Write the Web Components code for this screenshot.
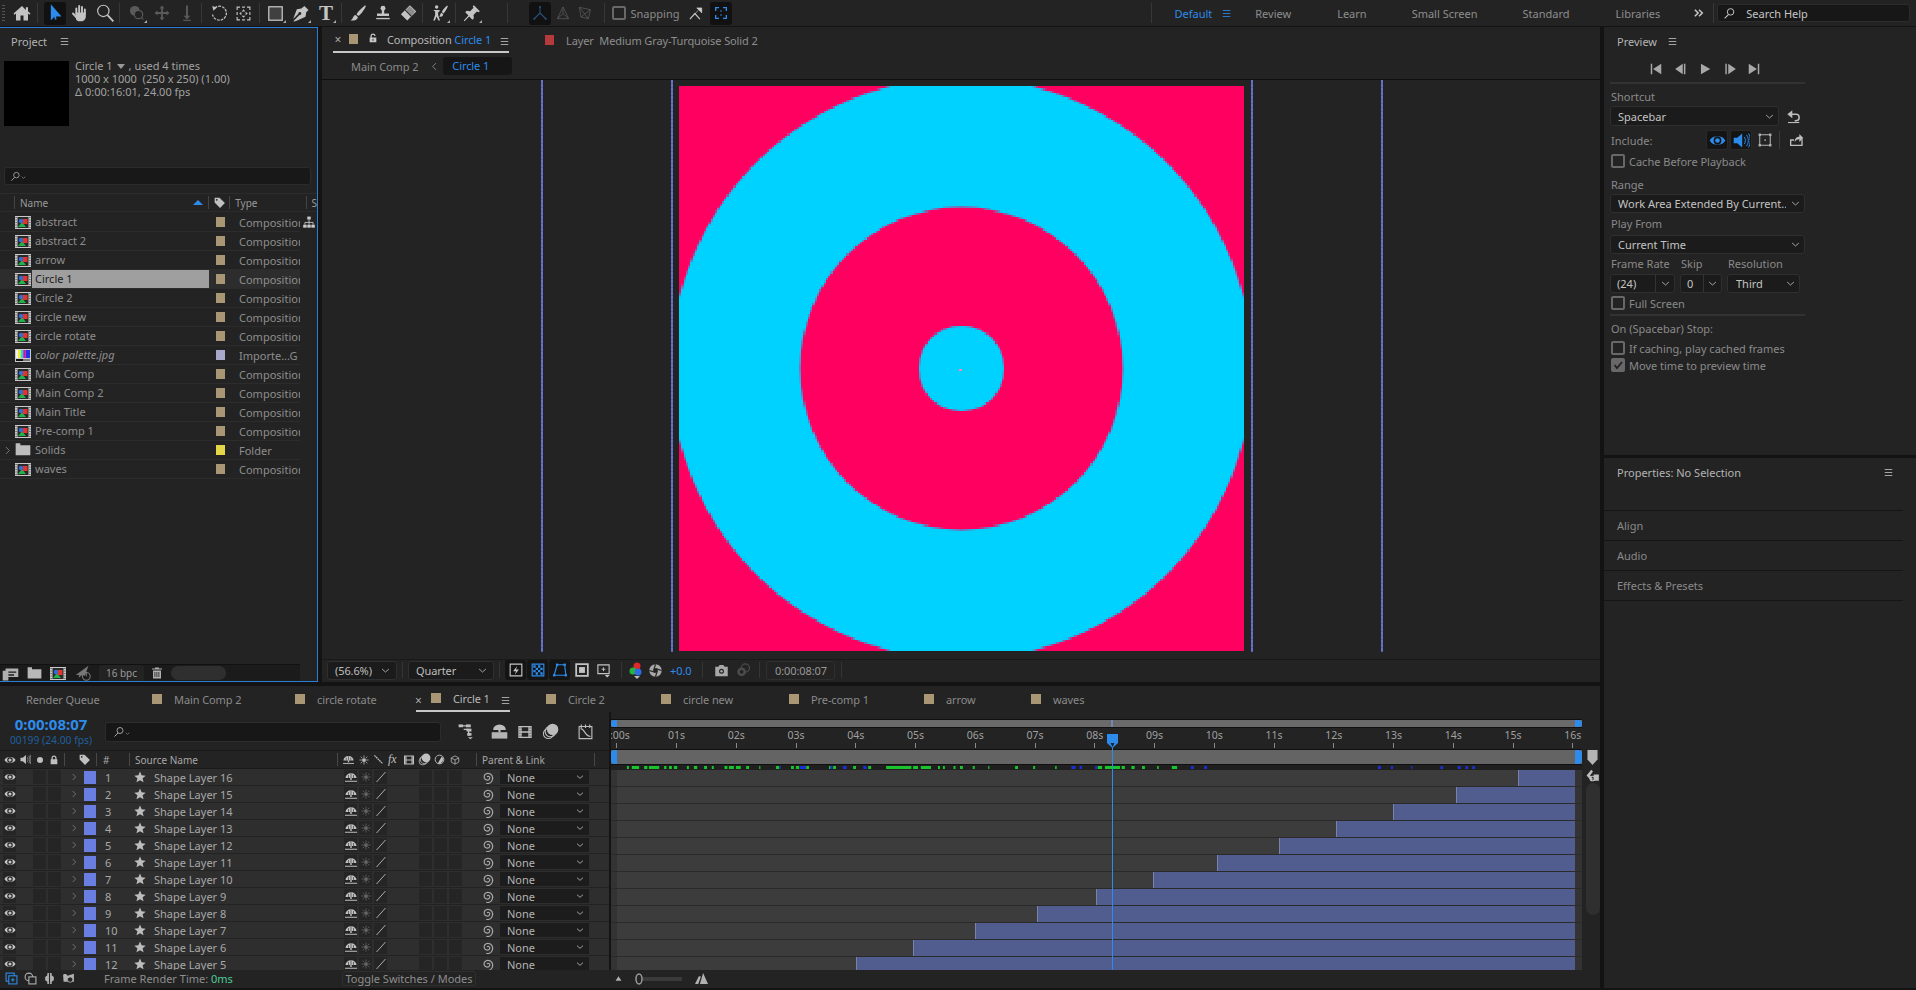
<![CDATA[<!DOCTYPE html>
<html lang="en"><head><meta charset="utf-8"><title>After Effects</title>
<style>
html,body{margin:0;height:990px;overflow:hidden;background:#131313}
body{font:11px "Noto Sans","Open Sans",sans-serif;color:#8e8e8e}
</style></head><body><ae-app></ae-app>
<script>
const BLUE='#2d8ceb';
const ICONS={
home:'<path d="M12 3.5 1.8 12.6l1.3 1.5L4.8 12.7V21h5.4v-6h3.6v6h5.4v-8.3l1.7 1.4 1.3-1.5-3-2.7V5h-2.6v3.3z"/>',
arrow:'<path d="M7 1.5v19.5l4.2-4.6.7 3.6 2-.4-.7-3.5h6.6z"/>',
hand:'<g stroke="currentColor" stroke-linecap="round" stroke-width="2.3" fill="none"><path d="M7.6 13V6.5M11 12V3.6M14.4 12V4.6M17.8 13V7.6M3.6 12.6 7.4 17"/></g><path d="M6.6 11.5h12.4v4.5c0 3.4-2.2 6-5.2 6h-2.4c-2 0-3.2-1-4.2-2.6z"/>',
zoom:'<circle cx="10" cy="9.5" r="6.8" fill="none" stroke="currentColor" stroke-width="1.4"/><path d="m15 14.5 7 7.5" stroke="currentColor" stroke-width="2.2"/>',
orbit:'<circle cx="9" cy="9" r="6.5"/><circle cx="14" cy="14" r="5.6" fill="#232323" stroke="currentColor" stroke-width="1.6"/><path d="M18 20l3 1-1-3z"/>',
move:'<path d="M12 2l3.4 4h-2.2v4.8H18V8.6l4 3.4-4 3.4v-2.2h-4.8V18h2.2L12 22l-3.4-4h2.2v-4.8H6v2.2L2 12l4-3.4v2.2h4.8V6H8.6z"/>',
zarrow:'<path d="M10.7 2h2.6v13.5h3l-4.3 5-4.3-5h3z"/><rect x="7" y="21" width="10" height="1.6"/>',
undo:'<path d="M6.5 5.2A9.3 9.3 0 1 1 3.4 14" fill="none" stroke="currentColor" stroke-width="1.7" stroke-dasharray="3.6 1.4"/><path d="M3 2.5 9 4.6 4.6 9z"/>',
cam:'<path d="M3 7V3h4M10 3h4M17 3h4v4M21 10v4M21 17v4h-4M14 21h-4M7 21H3v-4M3 14v-4" fill="none" stroke="currentColor" stroke-width="1.6"/><path d="M12 6l2.5 3h-5zM12 18l-2.5-3h5zM6 12l3-2.5v5zM18 12l-3 2.5v-5z"/>',
rect:'<rect x="2.5" y="2.5" width="19" height="19" fill="#404040" stroke="currentColor" stroke-width="1.8"/>',
pen:'<path d="M16.5 2.5 22 8l-3 3-1 6-11 5-5 1.500 1-2 7-7a2 2 0 1 0-1.500-1.500l-7 7L6.500 7l6-1z"/>',
brush:'<path d="M21.500 1.500C17 5 12 10 10 13.500l2.500 2.500C16 14 20 8 22.500 3z"/><path d="M9 14.500c-3.500 0-3 5-7 7.500 4.500.5 9-.5 10-4.500z"/>',
stamp:'<circle cx="12" cy="5.500" r="3.300"/><path d="M10.400 8h3.200v4.500H20v3.500H4v-3.500h6.400z"/><rect x="3" y="18.500" width="18" height="1.800"/>',
eraser:'<path d="M14.500 1.500 23 10 11 22 2.500 13.500z"/><path d="M8 8l8.500 8.500" stroke="#232323" stroke-width="1.400"/><path d="M8.500 8.500 14.500 3l7 7-5 6z" fill="#232323" opacity=".35"/>',
puppet:'<circle cx="7.500" cy="4" r="2.300"/><path d="M3 8h8.500v1.800L9.500 11v3.500l2.500 7.500H9.800l-2.300-5.500L5.200 22H3l2.500-7.500V10z"/><path d="M21.500 2c-3 2.500-6 6-7 8.500l2 2C19 10.500 21.500 6 22.500 3zM14 11.500c-2 .5-1.500 4-3 5.500 3 .3 5-1 5.300-3.500z"/>',
pin:'<path d="M14.500 1.500 22.500 9.500l-2 1.500-2-1-4.500 4.500.5 4.500-2 2-4.200-4.300L2 23l-1-1 6.200-6.800L3 11l2-2 4.500.5L14 5l-1-2z"/>',
axes:'<path d="M12 2v10M12 12 3 21M12 12l9 9" fill="none" stroke="currentColor" stroke-width="1.600"/><circle cx="12" cy="3" r="1.500"/><circle cx="3.500" cy="20.500" r="1.500"/><circle cx="20.500" cy="20.500" r="1.500"/>',
axes2:'<path d="M12 3 3.500 20.500h17zM12 3v10M12 13l-8.500 7.500M12 13l8.500 7.500" fill="none" stroke="currentColor" stroke-width="1.200"/>',
axes3:'<path d="M3.500 3.500 20 7 17 20.500 6 18zM3.500 3.500 17 20.500M20 7 6 18" fill="none" stroke="currentColor" stroke-width="1.200"/>',
snap:'<path d="M3 21 11 12l8 9" fill="none" stroke="currentColor" stroke-width="2"/><path d="M14 3h8v8zM11 13l5-6" fill="#ccc" stroke="#ccc"/>',
focus:'<path d="M4 9V4h5M15 4h5v5M20 15v5h-5M9 20H4v-5" fill="none" stroke="currentColor" stroke-width="2"/><rect x="11" y="8" width="2" height="2"/><rect x="11" y="14" width="2" height="2"/>',
search:'<circle cx="14" cy="9" r="6" fill="none" stroke="currentColor" stroke-width="1.800"/><path d="M10 14 3 21" stroke="currentColor" stroke-width="2"/>',
first:'<path d="M3 3h2.500v18H3zM21 3v18L7 12z"/>',prev:'<path d="M15 3v18L2 12zM17 3h2.500v18H17z"/>',play:'<path d="M5 3v18l16-9z"/>',next:'<path d="M4 3h2.500v18H4zM9 3v18l13-9z"/>',last:'<path d="M3 3v18l14-9zM18.500 3H21v18h-2.500z"/>',
revert:'<path d="M5 9.500h10a4.700 4.700 0 0 1 0 9.500h-2" fill="none" stroke="currentColor" stroke-width="2.200"/><path d="M9.500 3.500v12L2 9.500z"/><rect x="3" y="21" width="17" height="1.600"/>',
eye:'<path fill-rule="evenodd" d="M1 12C4 4 20 4 23 12c-3 8-19 8-22 0zm11-5.500a5.500 5.500 0 1 0 0 11 5.500 5.500 0 0 0 0-11z"/><circle cx="12" cy="12" r="3.200"/>',
speaker:'<path d="M1 8h5l7-6v20l-7-6H1z"/><path d="M16 7c2 3 2 7 0 10M19 4c3.500 5 3.500 11 0 16M22 2c3 5 3 15 0 20" fill="none" stroke="currentColor" stroke-width="1.400"/>',
frame:'<path d="M3 3h18v18H3z" fill="none" stroke="currentColor" stroke-width="1.800"/><rect x="11" y="11" width="2.500" height="2.500"/><rect x="1" y="1" width="4" height="4"/><rect x="19" y="1" width="4" height="4"/><rect x="1" y="19" width="4" height="4"/><rect x="19" y="19" width="4" height="4"/>',
export:'<path d="M3 11h6v2H5v6h15v-8h2v10H3z"/><path d="M10 15c0-6 3-8 7-8V3l6 6-6 6v-4c-3 0-5 1-7 4z"/>',
flow:'<rect x="9" y="1" width="6" height="5"/><rect x="2" y="15" width="6" height="5"/><rect x="9" y="15" width="6" height="5"/><rect x="16" y="15" width="6" height="5"/><path d="M12 6v5M5 15v-4h14v4M12 11v4" fill="none" stroke="currentColor" stroke-width="1.500"/>',
tag:'<path d="M3 3h9l10 10-9 9L3 12z"/><circle cx="7" cy="7" r="1.600" fill="#232323"/>',
lock:'<path d="M6 10V7a6 6 0 0 1 12 0v3h2v12H4V10zm3 0h6V7a3 3 0 0 0-6 0z"/>',
lockopen:'<path d="M6 11V7a6 6 0 0 1 12 0h-3a3 3 0 0 0-6 0v4h11v11H4V11z"/><rect x="11" y="14" width="2" height="5" fill="#232323"/>',
star:'<path d="M12 1l3.200 7.600 8.200.700-6.200 5.400 1.900 8L12 18.400 4.900 22.700l1.900-8L.6 9.300l8.200-.7z"/>',
shy:'<path d="M1 14a11 9.500 0 0 1 22 0H13.400v4h-2.800v-4z"/><rect x="0" y="19.500" width="24" height="2"/><path d="M7 14V8M17 14V8M12 14V5" stroke="#252525" stroke-width="1.200"/>',
shy2:'<path d="M3 10a9 8 0 0 1 18 0h-7.500v3h-3v-3z"/><rect x="1" y="13" width="22" height="9" opacity=".95"/>',
sun:'<circle cx="12" cy="12" r="4.500"/><path d="M12 1v6M12 17v6M1 12h6M17 12h6M4 4l4 4M16 16l4 4M20 4l-4 4M8 16l-4 4" stroke="currentColor" stroke-width="1.800"/>',
qual:'<path d="M3 22 21 2" stroke="currentColor" stroke-width="1.800"/>',
qual2:'<path d="M3 3l18 18" stroke="currentColor" stroke-width="2.600" stroke-dasharray="4 1"/>',
film:'<path fill-rule="evenodd" d="M2 3h20v18H2zm3 2H4v2h1zm0 4H4v2h1zm0 4H4v2h1zm0 4H4v2h1zm15-12h-1v2h1zm0 4h-1v2h1zm0 4h-1v2h1zm0 4h-1v2h1zM7 5v6h10V5zm0 8v6h10v-6z"/>',
blend:'<circle cx="9" cy="15" r="7" fill="none" stroke="currentColor" stroke-width="1.500"/><circle cx="12" cy="12" r="7.500" fill="none" stroke="currentColor" stroke-width="1.500"/><circle cx="15" cy="9" r="8"/>',
half:'<circle cx="12" cy="12" r="9.500" fill="none" stroke="currentColor" stroke-width="2"/><path d="M17 5.500A9 9 0 0 1 8 20.500z"/>',
cube:'<path d="M12 2 21 7v10l-9 5-9-5V7zM3 7l9 5 9-5M12 12v10" fill="none" stroke="currentColor" stroke-width="1.800"/>',
graph:'<path d="M3 5h18v17H3z" fill="none" stroke="currentColor" stroke-width="1.600"/><path d="M6 2v5M12 2v5M18 2v5" stroke="currentColor" stroke-width="1.600"/><path d="M5 8c6 0 6 11 14 11" fill="none" stroke="currentColor" stroke-width="1.600"/>',
flowt:'<path d="M1 4h10M8 9h7M15 9v9" stroke="currentColor" stroke-width="1.800" fill="none"/><rect x="1" y="2" width="6" height="4"/><rect x="11" y="2" width="7" height="4"/><rect x="12" y="8" width="7" height="4"/><rect x="13" y="14" width="6" height="4"/><path d="M14 20h7l-3.500 3z"/>',
spiral:'<path d="M12 12c1.500-2 5-.5 4 2.500-1 3-6.500 3-8-.5-1.500-4 2-8 6-7.500 5 .5 7.500 5.500 6 10-1.500 4-5.500 6-9 5" fill="none" stroke="currentColor" stroke-width="1.800"/>',
chev:'<path d="m3 8 9 8 9-8" fill="none" stroke="currentColor" stroke-width="2.600"/>',
chevr:'<path d="m8 3 9 9-9 9" fill="none" stroke="currentColor" stroke-width="2.200"/>',
chevl:'<path d="m16 3-9 9 9 9" fill="none" stroke="currentColor" stroke-width="2.400"/>',
dblr:'<path d="m2 4 8 8-8 8M12 4l8 8-8 8" fill="none" stroke="currentColor" stroke-width="3.600"/>',
menu:'<path d="M2 4h20M2 12h20M2 20h20" stroke="currentColor" stroke-width="2.200"/>',
sq:'<path d="M2 2h20v20H2z" fill="none" stroke="currentColor" stroke-width="3"/><rect x="7" y="7" width="10" height="10"/>',
flash:'<path d="M2 2h20v20H2z" fill="none" stroke="currentColor" stroke-width="2"/><path d="M14 5 7 14h5l-2 6 7-9h-5z"/>',
checker:'<path d="M2 2h20v20H2z" fill="none" stroke="currentColor" stroke-width="2"/><path d="M4 4h4v4H4zM12 4h4v4h-4zM8 8h4v4H8zM16 8h4v4h-4zM4 12h4v4H4zM12 12h4v4h-4zM8 16h4v4H8zM16 16h4v4h-4z"/>',
mask:'<path d="M7 3h13l2 18H2z" fill="none" stroke="currentColor" stroke-width="2"/><rect x="5" y="1" width="4" height="4"/><rect x="18" y="1" width="4" height="4"/><rect x="0" y="19" width="4" height="4"/><rect x="20" y="19" width="4" height="4"/>',
grid:'<path d="M3 3h18v14H3z" fill="none" stroke="currentColor" stroke-width="1.800"/><path d="M12 7v6M9 10h6" stroke="currentColor" stroke-width="1.500"/><path d="M14 19h8l-4 4z"/>',
exposure:'<circle cx="12" cy="12" r="10"/><path d="M12 2 9 12M22 12 12 9M12 22l3-10M2 12l10 3" stroke="#232323" stroke-width="1.800"/><circle cx="12" cy="12" r="3.500" fill="#232323"/>',
camera:'<path fill-rule="evenodd" d="M2 6h5l2-3h6l2 3h5v15H2zm10 3a4 4 0 1 0 0 8 4 4 0 0 0 0-8z"/><circle cx="12" cy="13" r="2"/>',
camera2:'<circle cx="15" cy="8" r="6.500" fill="none" stroke="currentColor" stroke-width="2"/><circle cx="9" cy="14" r="7"/><circle cx="9" cy="14" r="3" fill="#232323"/>',
folder:'<path d="M1 5V2h7v3h15v15H1z"/>',
newcomp:'<path d="M1 8h4V5h18v12H9v5H1zM9 9h11v2H9zM9 13h8v2H9z" fill-rule="evenodd"/>',
rocket:'<path d="M1 14 19 1l-5 14-4-1-5 4 1-4z"/><circle cx="16" cy="16" r="5.500" fill="none" stroke="currentColor" stroke-width="1.500"/><path d="M16 10v6" stroke="currentColor" stroke-width="1.500"/>',
trash:'<path d="M8 3V1h8v2h6v2H2V3zM4 7h16v16H4zm3 3v10h1.600V10zm4 0v10h1.600V10zm4 0v10h1.600V10z" fill-rule="evenodd"/>',
mount1:'<path d="M12 4 22 20H2z"/>',mount2:'<path d="M15 2 24 22H9zM7 8l4 .5L6 22H0z"/>',
shield:'<path d="M1 0h22v15L12 24 1 15z"/>',
status1:'<rect x="2" y="2" width="15" height="15" fill="none" stroke="currentColor" stroke-width="2"/><rect x="7" y="7" width="15" height="15" fill="#232323" stroke="currentColor" stroke-width="2"/><path d="M14.500 11v7M11 14.500h7" stroke="currentColor" stroke-width="1.800"/>',
status2:'<circle cx="9" cy="9" r="7" fill="none" stroke="currentColor" stroke-width="2"/><rect x="9" y="9" width="13" height="13" fill="#232323" stroke="currentColor" stroke-width="2"/>',
status3:'<path d="M8 2h8v4l4 3v6l-4 3v4H8v-4l-4-3V9l4-3z"/><rect x="11" y="2" width="2" height="20" fill="#232323"/>',
status4:'<path d="M2 6c0-3 7-4 8 1l3-1 9-3v15H3z"/><circle cx="15" cy="14" r="5" fill="#232323" stroke="currentColor" stroke-width="1.500"/>',
corner:'<path d="M9 22 1 13l8-10 3 3-5 7 5 6zM13 11h9v11h-9z"/><circle cx="11" cy="18" r="4" fill="none" stroke="currentColor" stroke-width="1.800"/>',
};
function def(name,css,html,init){
  customElements.define(name,class extends HTMLElement{
    connectedCallback(){
      if(this.shadowRoot)return;
      const r=this.attachShadow({mode:'open'});
      const a=n=>this.getAttribute(n);
      r.innerHTML='<style>'+css+'</style>'+(typeof html==='function'?html(a,this):html);
      if(init)init(r,a,this);
    }
  });
}
def('ae-icon',':host{display:inline-flex;flex:none;align-items:center;justify-content:center}svg{display:block;fill:currentColor}',
 (a)=>{const s=a('s')||16;const t=a('t')||s;return `<svg width="${s}" height="${t}" viewBox="0 0 24 24" preserveAspectRatio="${a('t')?'none':'xMidYMid'}">${ICONS[a('n')]||''}</svg>`;});
def('ae-comp-icon',':host{display:inline-block;flex:none;width:16px;height:13px}svg{display:block}',
 ()=>`<svg width="16" height="13" viewBox="0 0 16 13"><rect width="16" height="13" fill="#c9c9c9"/><path d="M.6 1.500h1M.6 4h1M.6 6.500h1M.6 9h1M.6 11.500h1M14.400 1.500h1M14.400 4h1M14.400 6.500h1M14.400 9h1M14.400 11.500h1" stroke="#333"/><rect x="2.500" y="1" width="11" height="11" fill="#2a2a2a"/><path d="M3 11 7 6l4 5z" fill="#22b24c"/><rect x="7.500" y="3" width="5" height="5" fill="#e0342f"/><circle cx="6" cy="5" r="2.200" fill="#2e6fd8"/></svg>`);
def('ae-pal-icon',':host{display:inline-block;flex:none;width:16px;height:13px}svg{display:block}',
 ()=>`<svg width="16" height="13" viewBox="0 0 16 13"><rect width="16" height="13" fill="#c9c9c9"/><rect x="1" y="1" width="2.400" height="8" fill="#f2f2f2"/><rect x="3.400" y="1" width="2.400" height="8" fill="#f4f200"/><rect x="5.800" y="1" width="2.400" height="8" fill="#00e8e8"/><rect x="8.200" y="1" width="2.400" height="8" fill="#ff00a0"/><rect x="10.600" y="1" width="4.400" height="8" fill="#2233dd"/><rect x="1" y="10" width="7" height="2" fill="#111"/><rect x="8" y="10" width="7" height="2" fill="#777"/></svg>`);
def('ae-swatch',':host{display:inline-block;flex:none;width:var(--w,9px);height:var(--h,10px);background:var(--c,#a99675)}','');
def('ae-check',`:host{display:flex;align-items:center;height:14px;color:#8a8a8a}
 i{flex:none;width:10px;height:10px;border:2px solid #686868;border-radius:2px;margin-right:4px;display:block;position:relative}
 :host([on]) i{background:#686868}
 svg{position:absolute;left:0;top:0}`,
 (a,el)=>`<i>${el.hasAttribute('on')?'<svg width="10" height="10" viewBox="0 0 10 10"><path d="M1.500 5l2.500 3 5-6" fill="none" stroke="#222" stroke-width="1.800"/></svg>':''}</i><slot></slot>`);
def('ae-dd',`:host{display:flex;align-items:center;box-sizing:border-box;background:#1b1b1b;border:1px solid #2f2f2f;border-radius:3px;color:#bdbdbd;padding-left:7px;white-space:nowrap;overflow:hidden}
 span{flex:1;min-width:0;overflow:hidden}
 b{flex:none;width:1px;align-self:stretch;background:#333}
 ae-icon{width:var(--cw,18px);color:#a8a8a8}`,
 (a,el)=>`<span><slot></slot></span>${el.hasAttribute('split')?'<b></b>':''}<ae-icon n="chev" s="9"></ae-icon>`);

/* ---------- tool button ---------- */
def('ae-tool',`:host{display:flex;flex:none;align-items:center;justify-content:center;width:var(--w,25px);height:25px;color:var(--c,#c4c4c4);position:relative}
 :host([active]) .b{background:#111;border-radius:3px}
 .b{display:flex;align-items:center;justify-content:center;width:22px;height:23px}
 :host([m]) .b::after{content:"";position:absolute;right:2px;bottom:3px;border-left:3px solid transparent;border-bottom:3px solid #aaa}`,
 (a)=>`<div class="b"><ae-icon n="${a('n')}" s="${a('s')||18}"></ae-icon><slot></slot></div>`);

def('ae-toolbar',`:host{display:flex;align-items:center;height:26px;background:#232323;flex:none;white-space:nowrap;color:#8e8e8e;padding-left:9px;box-sizing:border-box;position:relative}
 .g{display:flex;flex:none}
 .dim{--c:#5a5a5a}
 .s{flex:none;width:1px;height:20px;background:#383838}
 .t{font:700 21px "Liberation Serif",serif;color:#c4c4c4;line-height:25px}
 .wk{display:flex;align-items:center}
 .wk span{flex:none}
 .search{margin-left:3px;width:193px;height:18px;box-sizing:border-box;background:#171717;border:1px solid #2c2c2c;border-radius:3px;display:flex;align-items:center;color:#c6c6c6;padding-left:5px;gap:10px}
 .grip{position:absolute;left:2px;top:5px;width:3px;height:16px;background:repeating-linear-gradient(#555 0 1px,transparent 1px 3px)}`,
 ()=>`<div class="grip"></div>
 <div class="g"><ae-tool n="home" s="20"></ae-tool></div><div class="s" style="margin:0 3px"></div>
 <div class="g" style="margin-left:1px"><ae-tool n="arrow" s="20" active style="--c:${BLUE}"></ae-tool><ae-tool n="hand" s="20"></ae-tool><ae-tool n="zoom" s="20"></ae-tool></div><div class="s" style="margin:0 4px 0 2px"></div>
 <div class="g dim"><ae-tool n="orbit" m></ae-tool><ae-tool n="move"></ae-tool><ae-tool n="zarrow"></ae-tool></div><div class="s" style="margin:0 4px 0 2px"></div>
 <div class="g"><ae-tool n="undo"></ae-tool><ae-tool n="cam" s="17"></ae-tool></div><div class="s" style="margin:0 3px"></div>
 <div class="g"><ae-tool n="rect" m s="17"></ae-tool><ae-tool n="pen" m></ae-tool><ae-tool m n="" s="1"><span class="t">T</span></ae-tool></div><div class="s" style="margin:0 3px"></div>
 <div class="g"><ae-tool n="brush" ></ae-tool><ae-tool n="stamp"></ae-tool><ae-tool n="eraser"></ae-tool></div><div class="s" style="margin:0 4px 0 2px"></div>
 <div class="g"><ae-tool n="puppet" m></ae-tool></div><div class="s" style="margin:0 3px"></div>
 <div class="g"><ae-tool n="pin" m></ae-tool></div><div class="s" style="margin:0 21px 0 23px"></div>
 <div class="g" style="--w:22.500px;"><ae-tool n="axes" s="16" active style="--c:#26527e"></ae-tool><ae-tool n="axes2" s="16" style="--c:#585858"></ae-tool><ae-tool n="axes3" s="16" style="--c:#585858"></ae-tool></div><div class="s" style="margin:0 7px 0 7px"></div>
 <ae-check><span style="margin-left:1px">Snapping</span></ae-check>
 <ae-tool n="snap" s="15" style="margin-left:4px;--w:25px"></ae-tool>
 <ae-tool n="focus" s="16" active style="--c:${BLUE}"></ae-tool>
 <div class="s" style="margin-left:418px"></div>
 <div class="wk" style="margin-left:22px"><span style="color:${BLUE}">Default</span><ae-icon n="menu" s="9" style="color:${BLUE};margin-left:10px"></ae-icon>
 <span style="margin-left:24px">Review</span><span style="margin-left:46px">Learn</span><span style="margin-left:45px">Small Screen</span><span style="margin-left:45px">Standard</span><span style="margin-left:46px">Libraries</span>
 <ae-icon n="dblr" s="10" style="color:#c8c8c8;margin-left:34px"></ae-icon></div>
 <div class="s" style="margin-left:9px"></div>
 <div class="search"><ae-icon n="search" s="13"></ae-icon><span>Search Help</span></div>`);

/* ---------- project panel ---------- */
def('ae-prow',`:host{display:flex;height:19px;flex:none}
 .in{display:flex;align-items:center;width:300px;box-sizing:border-box;border-bottom:1px solid #2c2c2c;overflow:hidden;white-space:nowrap}
 :host([sel]) .in{background:#2d2d2d}
 .ar{flex:none;width:15px;display:flex;justify-content:center;color:#888}
 .ic{flex:none;width:17px;display:flex}
 .nm{flex:none;width:177px;box-sizing:border-box;padding-left:3px;height:18px;line-height:18px}
 :host([sel]) .nm{background:#9f9f9f;color:#1c1c1c}
 :host([it]) .nm{font-style:italic}
 .lb{flex:none;width:30px;padding-left:7px;box-sizing:border-box;display:flex}
 .ty{flex:none;width:61px;overflow:hidden}
 .tr{flex:none;width:17px;color:#c8c8c8;display:flex;justify-content:center;align-items:center}`,
 (a,el)=>{const k=a('k');
  const ic=k==='folder'?'<ae-icon n="folder" s="16" style="color:#bdbdbd"></ae-icon>':k==='pal'?'<ae-pal-icon></ae-pal-icon>':'<ae-comp-icon></ae-comp-icon>';
  return `<div class="in"><div class="ar">${k==='folder'?'<ae-icon n="chevr" s="9"></ae-icon>':''}</div><div class="ic">${ic}</div><div class="nm">${a('name')}</div><div class="lb"><ae-swatch style="--c:${a('c')||'#a99675'}"></ae-swatch></div><div class="ty">${a('type')}</div></div><div class="tr">${el.hasAttribute('flow')?'<ae-icon n="flow" s="14"></ae-icon>':''}</div>`;});

def('ae-project',`:host{display:flex;flex-direction:column;box-sizing:border-box;width:318px;flex:none;background:#232323;border:1px solid #2a7fd4;border-left:0;overflow:hidden;color:#8e8e8e}
 .h{flex:none;height:26px;display:flex;align-items:center;padding-left:11px;color:#b4b4b4;gap:13px}
 .info{flex:none;display:flex;padding:7px 0 0 4px;height:65px;gap:6px;color:#a2a2a2;line-height:13px}
 .info>div+div{margin-top:-2px}
 .th{width:65px;height:65px;background:#000;flex:none}
 .l1{display:flex;align-items:center;gap:4px}
 .tri{border:4px solid transparent;border-top:5px solid #999;border-bottom:0;margin-top:2px}
 .s{flex:none;margin:41px 6px 0 4px;height:18px;box-sizing:border-box;background:#181818;border:1px solid #2c2c2c;border-radius:3px;display:flex;align-items:center;padding-left:5px;color:#aaa}
 .hd{flex:none;display:flex;align-items:center;margin-top:8px;height:19px;box-sizing:border-box;border-top:1px solid #2c2c2c;border-bottom:1px solid #2c2c2c;font-size:10px;color:#9a9a9a;white-space:nowrap}
 .hd b{flex:none;width:1px;height:13px;background:#444}
 .list{flex:1;min-height:0;display:flex;flex-direction:column;margin-top:1px}
 .f{flex:none;height:17px;display:flex;width:300px;background:#1b1b1b;border-top:1px solid #111;box-sizing:border-box;align-items:center;color:#a8a8a8}
 .bpc{width:45px;height:16px;background:#232323;border-radius:2px;box-sizing:border-box;text-align:center;line-height:16px;font-size:10px;color:#999;margin-left:7px}
 .sb{width:55px;height:14px;border-radius:7px;background:#2f2f2f;margin-left:7px}
 .up{border:5px solid transparent;border-bottom:5px solid ${BLUE};border-top:0;margin-left:auto;margin-right:5px}`,
 ()=>{const rows=[['abstract',1],['abstract 2'],['arrow'],['Circle 1',0,1],['Circle 2'],['circle new'],['circle rotate'],['color palette.jpg',0,0,'pal'],['Main Comp'],['Main Comp 2'],['Main Title'],['Pre-comp 1'],['Solids',0,0,'folder'],['waves']];
 return `<div class="h"><span>Project</span><ae-icon n="menu" s="9" style="color:#c0c0c0"></ae-icon></div>
 <div class="info"><div class="th"></div><div><div class="l1">Circle 1 <i class="tri"></i> , used 4 times</div><div>1000 x 1000&nbsp; (250 x 250) (1.00)</div><div>Δ 0:00:16:01, 24.00 fps</div></div></div>
 <div class="s"><ae-icon n="search" s="11"></ae-icon><ae-icon n="chev" s="5" style="margin-top:3px"></ae-icon></div>
 <div class="hd"><b style="margin-left:14px"></b><span style="width:195px;padding-left:5px;box-sizing:border-box;display:flex;align-items:center;height:100%">Name<i class="up"></i></span><b></b><ae-icon n="tag" s="13" style="width:20px;color:#c0c0c0"></ae-icon><b></b><span style="width:76px;padding-left:5px;box-sizing:border-box">Type</span><b></b><span style="padding-left:5px">S</span></div>
 <div class="list">${rows.map(r=>{const k=r[3]||'comp';const c=k==='pal'?'#a8a8cc':k==='folder'?'#e3d649':'#a99675';const t=k==='pal'?'Importe...G':k==='folder'?'Folder':'Composition';return `<ae-prow name="${r[0]}" k="${k}" c="${c}" type="${t}" ${r[1]?'flow':''} ${r[2]?'sel':''} ${k==='pal'?'it':''}></ae-prow>`}).join('')}</div>
 <div class="f"><ae-icon n="newcomp" s="17" style="margin-left:2px;color:#b0b0b0"></ae-icon><ae-icon n="folder" s="15" style="margin-left:8px;color:#b8b8b8"></ae-icon><span style="margin-left:8px;display:flex"><ae-comp-icon></ae-comp-icon></span><ae-icon n="rocket" s="17" style="margin-left:9px;color:#777"></ae-icon><div class="bpc">16 bpc</div><ae-icon n="trash" s="12" style="margin-left:7px;color:#b0b0b0"></ae-icon><div class="sb" style="margin-left:8px"></div></div>`});

/* ---------- composition ---------- */
def('ae-guides',':host{position:absolute;inset:0;pointer-events:none}i{position:absolute;top:0;width:2px;height:572px;background:repeating-linear-gradient(#6474cc 0 3px,#5563b4 3px 4px)}','<i style="left:219px"></i><i style="left:349px"></i><i style="left:929px"></i><i style="left:1059px"></i>');
def('ae-canvas',':host{display:block;flex:none;width:565px;height:565px}canvas{display:block;width:565px;height:565px;image-rendering:pixelated}','<canvas width="250" height="250"></canvas>',
 (r)=>{const c=r.querySelector('canvas').getContext('2d');
  const C=(rad,col)=>{c.fillStyle=col;c.beginPath();c.arc(125,125,rad,0,7);c.fill()};
  c.fillStyle='#ff0060';c.fillRect(0,0,250,250);C(128.8,'#00d2ff');C(71.4,'#ff0060');C(19,'#00d2ff');c.fillStyle='#ff7fb0';c.fillRect(124,125,1,1)});
def('ae-comp',`:host{display:flex;flex-direction:column;width:1278px;flex:none;background:#232323;overflow:hidden;color:#8e8e8e;white-space:nowrap;margin-top:0;letter-spacing:-.1px}
 .t{flex:none;height:26px;display:flex;align-items:center;position:relative;padding-left:11px}
 .on{display:flex;align-items:center;width:176px;height:100%;box-sizing:border-box;border-bottom:2px solid #c8c8c8;color:#b8b8b8;position:relative;padding-left:0}
 .b{color:${BLUE}}
 .st{flex:none;height:26px;display:flex;align-items:center;color:#8a8a8a;padding-left:29px;border-bottom:1px solid #0f0f0f}
 .box{width:69px;height:18px;box-sizing:border-box;background:#161616;border-radius:3px;color:${BLUE};line-height:18px;padding-left:9px}
 .v{flex:1;min-height:0;position:relative;padding:6px 0 0 357px;background:#232323}
 .bar{flex:none;height:23px;display:flex;align-items:center;border-top:1px solid #191919;box-sizing:border-box;background:#232323;padding:0 0 2px 5px;color:#a8a8a8}
 .bar ae-dd{height:19px;flex:none;--cw:22px}
 .btn{flex:none;width:21px;height:20px;display:flex;align-items:center;justify-content:center;color:#c4c4c4;margin-right:1px}
 .btn.on2{background:#141414;border-radius:3px;color:${BLUE}}
 .sp{flex:none;width:1px;height:16px;background:#353535}
 .tc{flex:none;width:69px;height:19px;box-sizing:border-box;border:1px solid #2f2f2f;border-radius:3px;text-align:center;line-height:17px;color:#999;margin:0 6px}`,
 ()=>`<div class="t"><div class="on"><span style="width:16px;color:#aaa;font-size:12px;text-align:center;margin-left:-3px;margin-right:3px">×</span><ae-swatch style="--w:9px;--h:10px"></ae-swatch><ae-icon n="lockopen" s="10" style="margin:-3px 0 0 10px;color:#c8c8c8"></ae-icon><span style="margin-left:9px">Composition&nbsp;<span class="b">Circle 1</span></span><ae-icon n="menu" s="9" style="position:absolute;right:0;top:10px;color:#c0c0c0"></ae-icon></div>
 <ae-swatch style="--c:#b53a3d;margin-left:36px"></ae-swatch><span style="margin-left:12px">Layer&nbsp; Medium Gray-Turquoise Solid 2</span></div>
 <div class="st"><span>Main Comp 2</span><ae-icon n="chevl" s="9" style="margin:0 4px 0 12px"></ae-icon><div class="box">Circle 1</div></div>
 <div class="v"><ae-canvas></ae-canvas><ae-guides></ae-guides></div>
 <div class="bar"><ae-dd style="width:70px">(56.6%)</ae-dd><div class="sp" style="margin:0 5px"></div><ae-dd style="width:86px">Quarter</ae-dd><div class="sp" style="margin:0 5px 0 5px"></div>
 <div class="btn" style="background:#141414;border-radius:3px"><ae-icon n="flash" s="14"></ae-icon></div><div class="btn on2"><ae-icon n="checker" s="14"></ae-icon></div><div class="btn on2"><ae-icon n="mask" s="14"></ae-icon></div><div class="btn"><ae-icon n="sq" s="14"></ae-icon></div><div class="btn"><ae-icon n="grid" s="15"></ae-icon></div>
 <div class="sp" style="margin:0 7px 0 6px"></div>
 <svg width="16" height="18" viewBox="0 0 16 18" style="flex:none;margin-right:3px"><circle cx="8" cy="5" r="3.500" fill="#e0282a"/><circle cx="4" cy="10" r="3.500" fill="#27b33f"/><circle cx="9" cy="11" r="3.500" fill="#2f6be0"/><path d="M5 15h6l-3 3z" fill="#bbb"/></svg>
 <ae-icon n="exposure" s="15"></ae-icon><span style="color:${BLUE};margin-left:7px">+0.0</span>
 <div class="sp" style="margin:0 11px 0 11px"></div><ae-icon n="camera" s="15"></ae-icon><ae-icon n="camera2" s="15" style="margin-left:7px;color:#4c4c4c"></ae-icon><div class="sp" style="margin-left:8px"></div><div class="tc">0:00:08:07</div><div class="sp"></div></div>`);

/* ---------- preview ---------- */
def('ae-preview',`:host{display:flex;flex-direction:column;height:428px;flex:none;background:#232323;box-sizing:border-box;padding:0 0 0 6px;color:#8a8a8a;white-space:nowrap}
 .h{height:28px;display:flex;align-items:center;padding-left:7px;gap:11px;color:#b4b4b4;flex:none}
 .pb{display:flex;height:27px;align-items:center;color:#a8a8a8;padding-left:39px;flex:none;gap:10.500px}
 hr{border:0;height:2px;background:#323232;margin:0;width:195px;flex:none}
 .lb{height:15px;line-height:15px;padding-left:1px;flex:none}
 .w{display:flex;align-items:center;flex:none}
 .c{color:#c4c4c4}
 ae-check{flex:none;padding-left:1px}
 ae-dd{flex:none}
 .b{width:22px;height:20px;background:#141414;border-radius:3px;border:1px solid #2a2a2a;box-sizing:border-box;display:flex;align-items:center;justify-content:center;color:${BLUE};flex:none}`,
 ()=>`<div class="h"><span>Preview</span><ae-icon n="menu" s="9" style="color:#c0c0c0"></ae-icon></div>
 <div class="pb"><ae-icon n="first" s="14"></ae-icon><ae-icon n="prev" s="14"></ae-icon><ae-icon n="play" s="14"></ae-icon><ae-icon n="next" s="14"></ae-icon><ae-icon n="last" s="14"></ae-icon></div>
 <hr>
 <div class="lb" style="margin-top:5px">Shortcut</div>
 <div class="w" style="margin-top:2px"><ae-dd class="c" style="width:169px;height:20px">Spacebar</ae-dd><ae-icon n="revert" s="16" style="margin-left:7px;color:#bdbdbd"></ae-icon></div>
 <div class="w" style="margin-top:4px;height:20px"><span style="padding-left:1px;width:95px">Include:</span><div class="b"><ae-icon n="eye" s="17"></ae-icon></div><div class="b" style="margin-left:2px"><ae-icon n="speaker" s="17"></ae-icon></div><ae-icon n="frame" s="14" style="margin-left:6px;color:#b4b4b4"></ae-icon><span style="width:1px;height:18px;background:#3a3a3a;margin-left:7px"></span><ae-icon n="export" s="16" style="margin-left:8px;color:#bdbdbd"></ae-icon></div>
 <ae-check style="margin-top:4px">Cache Before Playback</ae-check>
 <div class="lb" style="margin-top:9px">Range</div>
 <ae-dd class="c" style="width:195px;height:19px;margin-top:2px">Work Area Extended By Current...</ae-dd>
 <div class="lb" style="margin-top:3px">Play From</div>
 <ae-dd class="c" style="width:195px;height:19px;margin-top:4px">Current Time</ae-dd>
 <div class="w lb" style="margin-top:2px"><span style="width:70px">Frame Rate</span><span style="width:47px">Skip</span><span>Resolution</span></div>
 <div class="w" style="margin-top:3px"><ae-dd class="c" split style="width:65px;height:19px;padding-left:6px">(24)</ae-dd><ae-dd class="c" split style="width:42px;height:19px;margin-left:5px;padding-left:6px;--cw:17px">0</ae-dd><ae-dd class="c" style="width:73px;height:19px;margin-left:5px;padding-left:8px">Third</ae-dd></div>
 <ae-check style="margin-top:3px">Full Screen</ae-check>
 <hr style="margin-top:4px">
 <div class="lb" style="margin-top:5px">On (Spacebar) Stop:</div>
 <ae-check style="margin-top:5px">If caching, play cached frames</ae-check>
 <ae-check on style="margin-top:3px">Move time to preview time</ae-check>`);
def('ae-props',`:host{display:flex;flex-direction:column;flex:1;min-height:0;background:#232323;color:#8a8a8a;box-sizing:border-box}
 .h{height:28px;display:flex;align-items:center;justify-content:space-between;padding:0 23px 0 13px;color:#b4b4b4;flex:none}
 .sp{height:24px;flex:none;border-bottom:1px solid #151515;margin-right:13px}
 .r{height:29px;line-height:29px;flex:none;padding-left:13px;border-bottom:1px solid #151515;margin-right:13px}`,
 ()=>`<div class="h"><span>Properties: No Selection</span><ae-icon n="menu" s="9" style="color:#c0c0c0"></ae-icon></div><div class="sp"></div><div class="r">Align</div><div class="r">Audio</div><div class="r">Effects &amp; Presets</div>`);

/* ---------- timeline ---------- */
def('ae-ttab',`:host{display:flex;align-items:center;flex:none;height:100%;box-sizing:border-box;color:#8a8a8a;white-space:nowrap;gap:12px;letter-spacing:-.1px}
 :host([on]){border-bottom:2px solid #c8c8c8;color:#b8b8b8;position:relative}`,
 (a,el)=>`<ae-swatch style="--w:10px"></ae-swatch><span>${a('t')}</span>`);
def('ae-layer',`:host{display:flex;align-items:center;height:17px;box-sizing:border-box;background:#2e2e2e;border-bottom:1px solid #222;flex:none;width:609px;color:#a8a8a8;white-space:nowrap;overflow:hidden}
 .k{flex:none;width:13px;height:14px;background:#252525;display:flex;align-items:center;justify-content:center}`,
 (a)=>`<div class="k" style="margin-left:3px"><ae-icon n="eye" s="12" style="color:#c4c4c4"></ae-icon></div><div class="k" style="margin-left:17px"></div><div class="k" style="margin-left:2px"></div>
 <ae-icon n="chevr" s="8" style="margin-left:9px;color:#888"></ae-icon><ae-swatch style="--c:#6a7de0;--w:12px;--h:13px;margin-left:6px"></ae-swatch>
 <span style="width:38px;flex:none;padding-left:9px;box-sizing:border-box">${a('n')}</span><ae-icon n="star" s="12" style="color:#bdbdbd"></ae-icon><span style="flex:none;width:198px;box-sizing:border-box;padding-left:8px">${a('name')}</span>
 <div class="k" style="color:#c0c0c0"><ae-icon n="shy" s="12"></ae-icon></div><div class="k" style="margin-left:2px;color:#666"><ae-icon n="sun" s="10"></ae-icon></div><div class="k" style="margin-left:2px;color:#bbb"><ae-icon n="qual" s="12"></ae-icon></div>
 <div class="k" style="margin-left:32px"></div><div class="k" style="margin-left:2px"></div><div class="k" style="margin-left:2px"></div>
 <ae-icon n="spiral" s="16" style="margin-left:17px;color:#a8a8a8"></ae-icon><div style="flex:none;width:89px;height:14px;margin-left:5px;background:#1c1c1c;display:flex;align-items:center;padding-left:7px;box-sizing:border-box;color:#b4b4b4"><span style="flex:1">None</span><ae-icon n="chev" s="8" style="width:18px"></ae-icon></div>`);
def('ae-track',`:host{display:flex;height:17px;box-sizing:border-box;flex:none;background:#3c3c3c;border-bottom:1px solid #2a2a2a;position:relative;padding-left:6px}
 :host::before{content:"";position:absolute;left:0;top:0;bottom:0;width:6px;background:#333}
 :host::after{content:"";position:absolute;right:0;top:0;bottom:0;width:7px;background:#333}
 i{display:block;flex:none;height:16px;background:#525d8f;border-left:1px solid #7a82a8;box-sizing:border-box}`,
 (a)=>`<i style="margin-left:${a('s')-617}px;width:${1575-a('s')}px"></i>`);
def('ae-ruler',`:host{display:block;height:20px;overflow:hidden;flex:none;background:#232323}
 .g{display:grid;grid-template-columns:repeat(17,59.750px);margin-left:-24px;width:1016px}
 .c{display:flex;flex-direction:column;align-items:center;height:20px;font-size:10.500px;color:#a0a0a0;line-height:15px}
 .c i{display:block;width:1px;height:5px;background:#888;margin-top:auto}`,
 ()=>`<div class="g">${Array.from({length:17},(_,i)=>`<div class="c"><span>${i==0?'0:00s':String(i).padStart(2,'0')+'s'}</span><i></i></div>`).join('')}</div>`);
def('ae-cache',':host{display:block;height:5px;background:#1f1f1f;flex:none}svg{display:block}',
 ()=>{const z=x=>600+x/2.45, y=x=>1240+x/2.32;
  const G=[[66,71],[78,96],[108,116],[120,145],[157,163],[169,176],[181,189],[213,218],[230,238],[255,262],[274,279],[305,312],[316,328],[333,345],[358,365],[390,393],[431,439],[468,475],[480,488],[505,512],[561,565],[571,578],[620,627],[657,664],[701,763],[767,779],[786,811],[828,833],[840,845],[866,871],[882,889],[913,918],[951,954],[1017,1024],[1061,1066],[1115,1119],[1219,1230],[1237,1274],[1278,1286],[1302,1310],[1328,1335],[1365,1369],[1401,1414]];
  const B=[[440,443],[490,505],[565,570],[595,604],[645,653],[1155,1165],[1175,1181],[1213,1218],[1448,1455],[1480,1487]];
  const B2=[[320,327],[350,355],[397,400],[465,471],[505,512],[523,529],[539,545]];
  const rc=(f,a,c)=>a.map(p=>`<rect x="${(f(p[0])-611).toFixed(1)}" y="1" width="${((p[1]-p[0])/(f===z?2.45:2.32)).toFixed(1)}" height="3" fill="${c}"/>`).join('');
  return `<svg width="971" height="5">${rc(z,G,'#19c42c')}${rc(z,B,'#1b2fd6')}${rc(y,B2,'#1b2fd6')}</svg>`;});
def('ae-playhead',`:host{position:absolute;left:495.500px;top:22px;bottom:0;width:11px;pointer-events:none}
 svg{display:block}i{position:absolute;left:5px;top:13px;bottom:0;width:1px;background:${BLUE}}`,
 ()=>`<svg width="11" height="14" viewBox="0 0 11 14"><path d="M0 0h11v9l-5.500 5L0 9z" fill="${BLUE}"/><path d="M3.500 9h4l-2 4z" fill="#123"/></svg><i></i>`);
def('ae-timeline',`:host{display:flex;flex-direction:column;height:302px;flex:none;background:#232323;color:#8a8a8a;white-space:nowrap;overflow:hidden}
 .tabs{flex:none;height:26px;display:flex;position:relative}
 .main{flex:1;min-height:0;display:flex}
 .left{flex:none;width:609px;display:flex;flex-direction:column;min-height:0}
 .ctl{flex:none;height:38px;display:flex;align-items:center;position:relative;box-sizing:border-box;padding-top:1px}
 .tc{flex:none;width:105px;text-align:center;line-height:15px;padding-right:3px;box-sizing:border-box}
 .tc b{display:block;font-size:15px;font-weight:700;color:${BLUE};line-height:17px}
 .tc span{color:#1f5f9e;font-size:10.300px}
 .s{flex:none;width:336px;height:20px;background:#171717;border:1px solid #2c2c2c;border-radius:3px;box-sizing:border-box;display:flex;align-items:center;padding-left:7px;color:#aaa}
 .ci{flex:none;display:flex;align-items:center;color:#bdbdbd}
 .hd{flex:none;height:19px;display:flex;align-items:center;border-top:1px solid #1a1a1a;border-bottom:1px solid #1a1a1a;box-sizing:border-box;color:#a8a8a8;font-size:10px}
 .hd b{flex:none;width:1px;height:13px;background:#484848}
 .hd ae-icon{color:#c0c0c0}
 .rows{flex:1;min-height:0;overflow:hidden;display:flex;flex-direction:column}
 .div{flex:none;width:2px;background:#141414}
 .right{flex:none;width:971px;display:flex;flex-direction:column;position:relative;min-height:0}
 .nav{flex:none;height:9px;margin-top:7px;background:#6a6a6a;border-top:1px solid #101010;border-bottom:1px solid #101010;box-sizing:border-box;position:relative}
 .cap{position:absolute;width:7px;background:${BLUE}}
 .mk{position:absolute;left:500px;top:0;bottom:0;width:2px;background:#6d89b0}
 .work{flex:none;height:16px;margin-top:1px;background:#646464;border-top:1px solid #101010;border-bottom:1px solid #101010;box-sizing:border-box;position:relative}
 .tr{flex:1;min-height:0;overflow:hidden;display:flex;flex-direction:column}
 .side{flex:none;width:18px;display:flex;flex-direction:column;align-items:center;padding-left:3px;box-sizing:border-box}
 .sb{flex:none;width:14px;height:132px;border-radius:7px;background:#2f2f2f;margin-top:1px}
 .st{flex:none;height:18px;display:flex;align-items:center;color:#8e8e8e;padding-bottom:1px;box-sizing:border-box}
 .st ae-icon{color:#b0b0b0}
 .tg{flex:none;width:134px;height:15px;box-sizing:border-box;border:1px solid #2f2f2f;border-radius:2px;text-align:center;line-height:13px}`,
 ()=>{const names=['16','15','14','13','12','11','10','9','8','7','6','5'];
  const st=[1518,1456,1393,1336,1279,1217,1153,1096,1037,975,913,856];
  return `<div class="tabs"><span style="margin-left:26px;width:126px;flex:none;line-height:27px;letter-spacing:-.1px">Render Queue</span>
  <ae-ttab t="Main Comp 2" style="width:143px"></ae-ttab><ae-ttab t="circle rotate" style="width:121px"></ae-ttab>
  <ae-ttab on t="Circle 1" style="width:94px;padding-left:15px;"></ae-ttab>
  <ae-ttab t="Circle 2" style="width:115px;margin-left:36px"></ae-ttab><ae-ttab t="circle new" style="width:128px"></ae-ttab><ae-ttab t="Pre-comp 1" style="width:135px"></ae-ttab><ae-ttab t="arrow" style="width:107px"></ae-ttab><ae-ttab t="waves"></ae-ttab>
  <span style="position:absolute;left:415px;top:6px;font-size:12px;color:#aaa">×</span><ae-icon n="menu" s="9" style="position:absolute;left:501px;top:10px;color:#c0c0c0"></ae-icon></div>
  <div class="main"><div class="left">
   <div class="ctl"><div class="tc"><b>0:00:08:07</b><span>00199 (24.00 fps)</span></div><div class="s"><ae-icon n="search" s="12"></ae-icon><ae-icon n="chev" s="5" style="margin-top:3px"></ae-icon></div>
    <div class="ci"><ae-icon n="flowt" s="17" style="margin-left:17px"></ae-icon><ae-icon n="shy2" s="17" style="margin-left:16px"></ae-icon><ae-icon n="film" s="16" style="margin-left:9px"></ae-icon><ae-icon n="blend" s="17" style="margin-left:9px"></ae-icon><ae-icon n="graph" s="17" style="margin-left:18px"></ae-icon></div></div>
   <div class="hd"><ae-icon n="eye" s="12" style="margin-left:4px"></ae-icon><ae-icon n="speaker" s="11" style="margin-left:4px"></ae-icon><i style="width:6px;height:6px;border-radius:3px;background:#c0c0c0;margin-left:6px;flex:none"></i><ae-icon n="lock" s="10" style="margin-left:6px"></ae-icon><b style="margin-left:5px"></b><ae-icon n="tag" s="13" style="margin-left:13px"></ae-icon><b style="margin-left:5px"></b><span style="width:32px;flex:none;padding-left:6px;box-sizing:border-box">#</span><b></b><span style="width:207px;flex:none;padding-left:5px;box-sizing:border-box">Source Name</span><b></b>
    <ae-icon n="shy" s="11" style="margin-left:5px"></ae-icon><ae-icon n="sun" s="10" style="margin-left:5px"></ae-icon><ae-icon n="qual2" s="11" style="margin-left:4px"></ae-icon><span style="flex:none;font:italic 12px 'Liberation Serif',serif;color:#c0c0c0;margin-left:4px;width:12px">fx</span><ae-icon n="film" s="12" style="margin-left:3px"></ae-icon><ae-icon n="blend" s="13" style="margin-left:3px"></ae-icon><ae-icon n="half" s="11" style="margin-left:3px"></ae-icon><ae-icon n="cube" s="10" style="margin-left:5px"></ae-icon><b style="margin-left:16px"></b><span style="width:117px;flex:none;padding-left:5px;box-sizing:border-box">Parent &amp; Link</span><b></b></div>
   <div class="rows">${names.map((n,i)=>`<ae-layer n="${i+1}" name="Shape Layer ${n}"></ae-layer>`).join('')}</div>
  </div><div class="div"></div><div class="right">
   <div class="nav"><div class="cap" style="left:0;top:0;bottom:0;border-radius:4px 0 0 4px;width:6px"></div><div class="cap" style="right:0;top:0;bottom:0;border-radius:0 4px 4px 0"></div><div class="mk"></div></div>
   <ae-ruler></ae-ruler>
   <div class="work"><div class="cap" style="left:0;top:0;bottom:0;border-radius:4px 0 0 4px;width:6px"></div><div class="cap" style="right:0;top:0;bottom:0;border-radius:0 4px 4px 0"></div></div>
   <ae-cache></ae-cache>
   <div class="tr">${st.map(s=>`<ae-track s="${s}"></ae-track>`).join('')}</div>
   <ae-playhead></ae-playhead>
  </div><div class="side"><div style="height:38px;flex:none"></div><ae-icon n="shield" s="11" t="15" style="color:#b4b4b4"></ae-icon><ae-icon n="corner" s="14" style="margin-top:3px;color:#bdbdbd"></ae-icon><div class="sb"></div></div></div>
  <div class="st"><ae-icon n="status1" s="13" style="margin-left:5px;color:${BLUE}"></ae-icon><ae-icon n="status2" s="13" style="margin-left:6px"></ae-icon><ae-icon n="status3" s="13" style="margin-left:6px"></ae-icon><ae-icon n="status4" s="13" style="margin-left:6px"></ae-icon>
   <span style="margin-left:29px;width:238px;flex:none">Frame Render Time:&nbsp;<span style="color:#4ecb97">0ms</span></span><span class="tg">Toggle Switches / Modes</span>
   <ae-icon n="mount1" s="7" style="margin-left:139px"></ae-icon><svg width="47" height="12" viewBox="0 0 47 12" style="flex:none;margin-left:13px"><rect x="3" y="4" width="44" height="4" fill="#3a3a3a"/><ellipse cx="4" cy="6" rx="3" ry="5" fill="#232323" stroke="#999" stroke-width="1.500"/></svg><ae-icon n="mount2" s="13" style="margin-left:13px"></ae-icon></div>`});

/* ---------- app ---------- */
def('ae-app',`:host{display:flex;flex-direction:column;height:990px;width:1916px;overflow:hidden;background:#131313}
 .m{flex:1;min-height:0;display:flex;margin-top:1px;gap:4px}
 .l{flex:none;width:1600px;display:flex;flex-direction:column;height:961px;gap:4px}
 .u{flex:none;height:655px;display:flex;gap:4px}
 .r{flex:1;min-width:0;display:flex;flex-direction:column;gap:3px;height:961px}`,
 ()=>`<ae-toolbar></ae-toolbar><div class="m"><div class="l"><div class="u"><ae-project></ae-project><ae-comp></ae-comp></div><ae-timeline></ae-timeline></div><div class="r"><ae-preview></ae-preview><ae-props></ae-props></div></div>`);
</script></body></html>]]>
